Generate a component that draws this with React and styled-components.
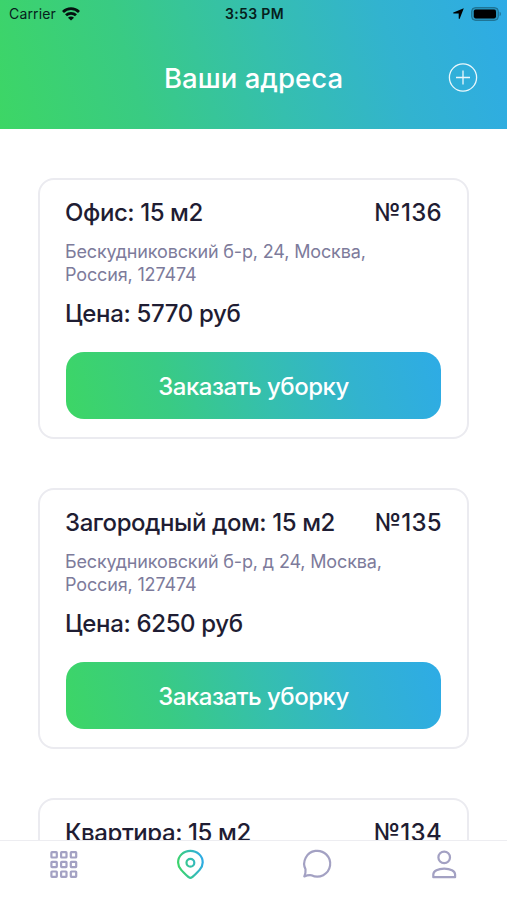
import React from 'react';
import styled, { createGlobalStyle } from 'styled-components';

const GlobalStyle = createGlobalStyle`
  * {
    box-sizing: border-box;
  }

  body {
    margin: 0;
    background: #fff;
    font-family: Inter, 'Liberation Sans', sans-serif;
    color: #1f1d33;
    -webkit-font-smoothing: antialiased;
  }
`;

const gradient = '74deg, #3dd665 0%, #39cb83 27%, #35bfae 53%, #32b3cf 76%, #2eabe6 100%';

const Screen = styled.div`
  display: flex;
  flex-direction: column;
  width: 100%;
  height: 900px;
  overflow: hidden;
`;

const Header = styled.header`
  flex: none;
  height: 129px;
  background: linear-gradient(${gradient});
`;

const StatusBar = styled.div`
  display: grid;
  grid-template-columns: 1fr auto 1fr;
  align-items: center;
  height: 27px;
  padding: 0 5px 0 9px;
  font-size: 14px;
  line-height: 27px;
  color: #06201c;
`;

const Carrier = styled.div`
  display: flex;
  align-items: center;
  gap: 6px;
  letter-spacing: 0.15px;
`;

const Clock = styled.div`
  margin-right: 2px;
  font-size: 14px;
  font-weight: 600;
  letter-spacing: 0.35px;
`;

const Indicators = styled.div`
  display: flex;
  align-items: center;
  justify-content: flex-end;
  gap: 7px;
`;

const TitleBar = styled.div`
  display: grid;
  grid-template-columns: 1fr auto 1fr;
  align-items: center;
  height: 102px;
  padding: 0 29px;
`;

const Title = styled.h1`
  grid-column: 2;
  margin: 0;
  font-size: 27.5px;
  font-weight: 500;
  line-height: 32px;
  letter-spacing: 0.05px;
  color: #fff;
`;

const AddButton = styled.button`
  justify-self: end;
  display: block;
  padding: 0;
  border: 0;
  background: none;
  line-height: 0;
`;

const List = styled.main`
  flex: 1;
  min-height: 0;
  display: flex;
  flex-direction: column;
  gap: 49px;
  padding: 49px 38px 0;
  overflow: hidden;
`;

const Card = styled.article`
  flex: none;
  height: 261px;
  padding: 18px 25px 0;
  border: 2px solid #ebebf0;
  border-radius: 16px;
`;

const CardHead = styled.div`
  display: flex;
  justify-content: space-between;
`;

const CardTitle = styled.h2`
  margin: 0;
  font-size: 24px;
  font-weight: 500;
  line-height: 30px;
  letter-spacing: ${({ $spacing }) => $spacing || '-0.42px'};
  white-space: nowrap;
`;

const Address = styled.p`
  width: 330px;
  margin: 12px 0 13px;
  font-size: 18px;
  line-height: 23px;
  letter-spacing: -0.15px;
  color: #7d7b9b;
`;

const OrderButton = styled.button`
  display: block;
  width: calc(100% - 2px);
  height: 67px;
  margin: 23px 1px 0;
  padding: 1px 0 0;
  border: 0;
  border-radius: 18px;
  background: linear-gradient(${gradient});
  font-family: inherit;
  font-size: 24px;
  font-weight: 500;
  letter-spacing: -0.5px;
  color: #fff;
`;

const TabBar = styled.nav`
  flex: none;
  display: grid;
  grid-template-columns: repeat(4, 1fr);
  justify-items: center;
  height: 60px;
  padding-top: 7px;
  border-top: 1px solid #ededf1;
  background: #fff;
`;

const Tab = styled.button`
  width: 32px;
  height: 32px;
  padding: 0;
  border: 0;
  background: none;
  color: #a3a1c3;
  line-height: 0;
`;

const WifiIcon = () => (
  <svg width="18" height="14" viewBox="0 0 18 14" fill="none" stroke="#04110f" strokeWidth="2.8">
    <path d="M1 4.900a11.600 11.600 0 0 1 16 0" />
    <path d="M4 8.300a7.200 7.200 0 0 1 10 0" />
    <path d="M9 13.600 6 10.700a4.200 4.200 0 0 1 6 0z" fill="#04110f" stroke="none" />
  </svg>
);

const LocationIcon = () => (
  <svg width="11" height="11" viewBox="0 0 11 11" fill="#000">
    <path d="M10.800.2 6.800 10.600a.6.6 0 0 1-1.100-.1V5.600H.6a.6.6 0 0 1-.2-1.100z" />
  </svg>
);

const BatteryIcon = () => (
  <svg width="31" height="14" viewBox="0 0 31 14">
    <rect x="0.6" y="0.6" width="26.800" height="12.800" rx="3.800" fill="#1f7c9c" fillOpacity="0.5" stroke="#123f50" strokeOpacity="0.5" />
    <rect x="2.800" y="2.600" width="22.200" height="8.800" rx="1.800" fill="#000" />
    <path d="M28.700 4.800c1.400.6 1.400 3.800 0 4.400z" fill="#123f50" fillOpacity="0.65" />
  </svg>
);

const PlusIcon = () => (
  <svg width="30" height="30" viewBox="0 0 30 30" fill="none" stroke="#fff" strokeOpacity="0.9" strokeWidth="1.300">
    <circle cx="15" cy="14.500" r="13.600" />
    <path d="M15 7.500v14M8 14.500h14" />
  </svg>
);

const GridIcon = () => (
  <svg width="32" height="32" viewBox="0 0 32 32" fill="none" stroke="currentColor" strokeWidth="2.200">
    {[4.1, 13.8, 23.5].map(y =>
      [4.4, 14.1, 23.8].map(x => (
        <rect key={`${x}-${y}`} x={x} y={y} width="5.400" height="5.400" rx="0.6" />
      )),
    )}
  </svg>
);

const PinIcon = () => (
  <svg width="32" height="32" viewBox="0 0 32 32" fill="none" stroke="url(#pin)" strokeWidth="2.200">
    <defs>
      <linearGradient id="pin" x1="3" y1="18" x2="29" y2="12" gradientUnits="userSpaceOnUse">
        <stop offset="0" stopColor="#3dd665" />
        <stop offset="1" stopColor="#2eabe6" />
      </linearGradient>
    </defs>
    <path d="M16.400 2.800c-7 0-12.300 5.200-12.300 11.600 0 5.500 5.100 9.900 10.600 14.800q1.700 1.400 3.400 0c5.500-4.900 10.600-9.300 10.600-14.800 0-6.400-5.300-11.600-12.300-11.600z" />
    <circle cx="16.400" cy="14.700" r="3.900" />
  </svg>
);

const ChatIcon = () => (
  <svg width="32" height="32" viewBox="0 0 32 32" fill="none" stroke="currentColor" strokeWidth="2.200" strokeLinejoin="round">
    <path d="M3.300 28.400Q4.900 25.200 4.500 21.300A13 12.900 0 1 1 10.500 27.300Q7 26.900 3.300 28.400Z" />
  </svg>
);

const UserIcon = () => (
  <svg width="32" height="32" viewBox="0 0 32 32" fill="none" stroke="currentColor" strokeWidth="2.200" strokeLinejoin="round">
    <circle cx="16.200" cy="9.400" r="5.800" />
    <path d="M5.300 29.200v-2.700c0-3.400 4.700-5.900 10.900-5.900s10.900 2.500 10.900 5.900v2.700z" />
  </svg>
);

const addresses = [
  {
    id: 136,
    name: 'Офис: 15 м2',
    address: 'Бескудниковский б-р, 24, Москва, Россия, 127474',
    price: 5770,
  },
  {
    id: 135,
    name: 'Загородный дом: 15 м2',
    address: 'Бескудниковский б-р, д 24, Москва, Россия, 127474',
    price: 6250,
  },
  {
    id: 134,
    name: 'Квартира: 15 м2',
    address: 'Бескудниковский б-р, 24, Москва, Россия, 127474',
    price: 5770,
  },
];

const tabs = [
  { name: 'services', Icon: GridIcon },
  { name: 'addresses', Icon: PinIcon },
  { name: 'chat', Icon: ChatIcon },
  { name: 'profile', Icon: UserIcon },
];

const App = () => (
  <>
    <GlobalStyle />
    <Screen>
      <Header>
        <StatusBar>
          <Carrier>
            Carrier <WifiIcon />
          </Carrier>
          <Clock>3:53 PM</Clock>
          <Indicators>
            <LocationIcon />
            <BatteryIcon />
          </Indicators>
        </StatusBar>
        <TitleBar>
          <Title>Ваши адреса</Title>
          <AddButton>
            <PlusIcon />
          </AddButton>
        </TitleBar>
      </Header>

      <List>
        {addresses.map(({ id, name, address, price }) => (
          <Card key={id}>
            <CardHead>
              <CardTitle>{name}</CardTitle>
              <CardTitle $spacing="0.3px">№{id}</CardTitle>
            </CardHead>
            <Address>{address}</Address>
            <CardTitle as="div" $spacing="-0.35px">
              Цена: {price} руб
            </CardTitle>
            <OrderButton>Заказать уборку</OrderButton>
          </Card>
        ))}
      </List>

      <TabBar>
        {tabs.map(({ name, Icon }) => (
          <Tab key={name}>
            <Icon />
          </Tab>
        ))}
      </TabBar>
    </Screen>
  </>
);

export default App;
